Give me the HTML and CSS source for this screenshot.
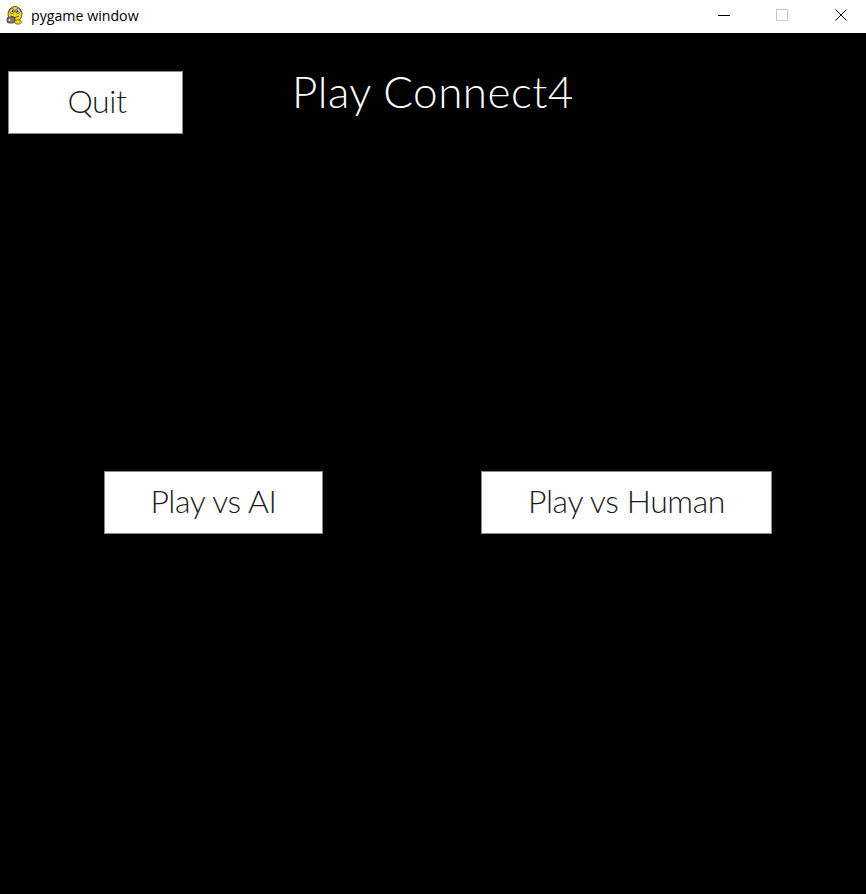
FILE: index.html
```html
<!DOCTYPE html>
<html>
<head>
<meta charset="utf-8">
<link rel="stylesheet" href="styles.css">
</head>
<body>
<div class="window">
  <div class="titlebar">
    <div class="app">
      <svg class="app-icon" width="18" height="20" viewBox="0 0 18 20">
        <ellipse cx="9" cy="9" rx="7" ry="7.5" fill="#f2d51a" stroke="#6b5a10" stroke-width="1"/>
        <circle cx="6" cy="6" r="2.3" fill="#fff" stroke="#333" stroke-width="0.8"/>
        <circle cx="12" cy="6" r="2.3" fill="#fff" stroke="#333" stroke-width="0.8"/>
        <circle cx="6.5" cy="6.3" r="1" fill="#111"/>
        <circle cx="11.5" cy="6.3" r="1" fill="#111"/>
        <path d="M5 11 Q9 14 13 11" fill="none" stroke="#6b5a10" stroke-width="1"/>
        <rect x="1" y="12" width="8" height="6" rx="2" fill="#7a7a7a" stroke="#333" stroke-width="0.8"/>
        <circle cx="3.5" cy="15" r="1" fill="#ddd"/>
        <ellipse cx="12" cy="17" rx="3.5" ry="2.2" fill="#f2d51a" stroke="#6b5a10" stroke-width="0.8"/>
      </svg>
      <span class="app-title">pygame window</span>
    </div>
    <div class="controls">
      <svg class="ctl" width="58" height="33" viewBox="0 0 58 33"><path d="M23 15.5h12" stroke="#000" stroke-width="1"/></svg>
      <svg class="ctl" width="58" height="33" viewBox="0 0 58 33"><rect x="23.5" y="9.5" width="11" height="11" fill="none" stroke="#c8c8c8" stroke-width="1"/></svg>
      <svg class="ctl" width="55" height="33" viewBox="0 0 55 33"><path d="M24.5 9.5l11 11M35.5 9.5l-11 11" stroke="#000" stroke-width="1"/></svg>
    </div>
  </div>
  <main class="screen">
    <div class="top-row">
      <button class="btn btn-quit">Quit</button>
      <h1 class="title">Play Connect4</h1>
    </div>
    <div class="mode-row">
      <button class="btn btn-ai">Play vs AI</button>
      <button class="btn btn-human">Play vs Human</button>
    </div>
  </main>
</div>
</body>
</html>
```
FILE: styles.css
```css
html, body {
  margin: 0;
  padding: 0;
  background: #000;
}
.window {
  width: 866px;
  height: 894px;
  display: flex;
  flex-direction: column;
}
.titlebar {
  height: 33px;
  background: #fff;
  display: flex;
  align-items: center;
  justify-content: space-between;
  flex-shrink: 0;
}
.app {
  display: flex;
  align-items: center;
  padding-left: 6px;
}
.app-icon {
  display: block;
  margin-top: -3px;
}
.app-title {
  margin-left: 7px;
  font-family: "Open Sans", "Liberation Sans", sans-serif;
  font-size: 14.2px;
  color: #000;
  margin-top: -2px;
}
.controls {
  display: flex;
  height: 33px;
}
.ctl {
  display: block;
}
.screen {
  flex: 1;
  background: #000;
}
.top-row {
  display: flex;
  align-items: flex-start;
  padding-top: 38px;
  padding-left: 8px;
}
.btn {
  display: flex;
  align-items: center;
  justify-content: center;
  height: 63px;
  box-sizing: border-box;
  background: #fff;
  border: 1px solid #8a8a8a;
  padding: 0 0 4px 0;
  margin: 0;
  font-family: Lato, "Open Sans", sans-serif;
  font-weight: 300;
  font-size: 32px;
  letter-spacing: -0.4px;
  color: #1c1c1c;
  line-height: 1;
}
.btn-quit {
  width: 175px;
  padding-left: 3px;
}
.title {
  margin: -2px 0 0 109px;
  font-family: Lato, "Open Sans", sans-serif;
  font-weight: 300;
  font-size: 44px;
  letter-spacing: 0.5px;
  line-height: 1;
  color: #fff;
}
.mode-row {
  display: flex;
  margin-top: 337px;
  padding-left: 104px;
  gap: 158px;
}
.btn-ai {
  width: 219px;
}
.btn-human {
  width: 291px;
}
```
